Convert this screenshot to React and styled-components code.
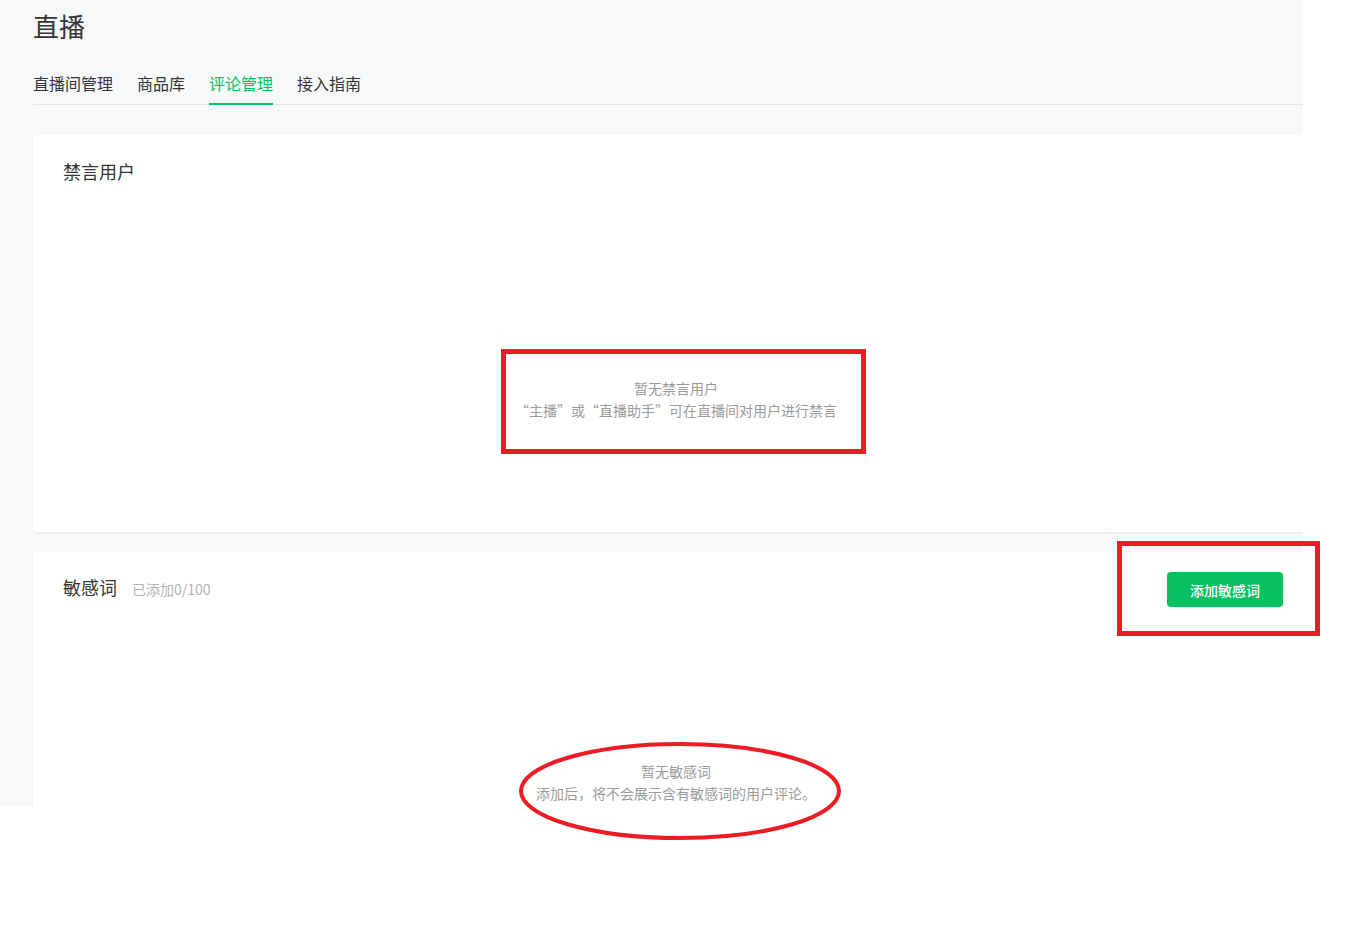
import React from 'react'
import styled, { createGlobalStyle } from 'styled-components'

const GlobalStyle = createGlobalStyle`
  html, body {
    margin: 0;
    padding: 0;
    background: #fff;
    font-family: "Noto Sans CJK SC", "Noto Sans", sans-serif;
  }
`

const Page = styled.div`
  position: relative;
  width: 1350px;
  height: 938px;
  background: #fff;
  overflow: hidden;
`

const Frame = styled.div`
  width: 1303px;
  height: 807px;
  overflow: hidden;
  background: #f7f8fa;
  .inner {
    width: 1286px;
    padding-left: 33px;
    padding-top: 8px;
  }
`

const PageTitle = styled.h1`
  margin: 0;
  font-size: 26px;
  line-height: 36px;
  font-weight: normal;
  color: #353535;
`

const Tabs = styled.div`
  display: flex;
  gap: 24px;
  margin-top: 27px;
  border-bottom: 1px solid #e2e4e8;
`

const Tab = styled.div`
  font-size: 16px;
  line-height: 24px;
  padding-bottom: 8px;
  margin-bottom: -1px;
  color: ${p => (p.active ? '#07c160' : '#353535')};
  border-bottom: 2px solid ${p => (p.active ? '#07c160' : 'transparent')};
  cursor: pointer;
`

const Card = styled.div`
  background: #fff;
  border-radius: 4px;
  box-shadow: 0 1px 2px rgba(0, 0, 0, 0.08);
  margin-top: ${p => p.top}px;
  height: ${p => p.height}px;
  padding: 0 36px 0 30px;
  box-sizing: border-box;
`

const CardHeader = styled.div`
  display: flex;
  align-items: center;
  justify-content: space-between;
  box-sizing: border-box;
  padding-top: ${p => p.pad}px;
  height: ${p => p.h}px;
`

const HeaderLeft = styled.div`
  display: flex;
  align-items: baseline;
  gap: 15px;
  margin-top: ${p => p.shift || 0}px;
`

const CardTitle = styled.div`
  font-size: 18px;
  line-height: 24px;
  color: #353535;
`

const Counter = styled.span`
  font-size: 14px;
  color: #b2b2b2;
`

const GreenButton = styled.button`
  width: 116px;
  height: 35px;
  border: none;
  border-radius: 4px;
  background: #07c160;
  color: #fff;
  font-family: inherit;
  font-size: 14px;
  font-weight: 500;
  cursor: pointer;
`

const Empty = styled.div`
  padding-top: ${p => p.top}px;
  text-align: center;
  font-size: 14px;
  line-height: 22px;
  color: #9a9a9a;
  margin-left: -30px;
  margin-right: -36px;
`

const MarkBox = styled.div`
  position: absolute;
  box-sizing: border-box;
  border: 5px solid #ed1c24;
  left: ${p => p.x}px;
  top: ${p => p.y}px;
  width: ${p => p.w}px;
  height: ${p => p.h}px;
  pointer-events: none;
`

const MarkEllipse = styled.svg`
  position: absolute;
  left: 516px;
  top: 739px;
  pointer-events: none;
`

const tabs = ['直播间管理', '商品库', '评论管理', '接入指南']

export default function App() {
  return (
    <Page>
      <GlobalStyle />
      <Frame>
        <div className='inner'>
          <PageTitle>直播</PageTitle>
          <Tabs>
            {tabs.map((t, i) => (
              <Tab key={t} active={i === 2}>{t}</Tab>
            ))}
          </Tabs>

          <Card top={30} height={397}>
            <CardHeader pad={24} h={48}>
              <CardTitle>禁言用户</CardTitle>
            </CardHeader>
            <Empty top={194}>
              <div>暂无禁言用户</div>
              <div>“主播”或“直播助手”可在直播间对用户进行禁言</div>
            </Empty>
          </Card>

          <Card top={20} height={400}>
            <CardHeader pad={20} h={55}>
              <HeaderLeft shift={-5}>
                <CardTitle>敏感词</CardTitle>
                <Counter>已添加0/100</Counter>
              </HeaderLeft>
              <GreenButton>添加敏感词</GreenButton>
            </CardHeader>
            <Empty top={153}>
              <div>暂无敏感词</div>
              <div>添加后，将不会展示含有敏感词的用户评论。</div>
            </Empty>
          </Card>
        </div>
      </Frame>

      <MarkBox x={501} y={349} w={365} h={105} />
      <MarkBox x={1117} y={541} w={203} h={95} />
      <MarkEllipse width='330' height='106' viewBox='0 0 330 106'>
        <ellipse cx='164' cy='52' rx='159' ry='47' fill='none' stroke='#ed1c24' strokeWidth='4' />
      </MarkEllipse>
    </Page>
  )
}
